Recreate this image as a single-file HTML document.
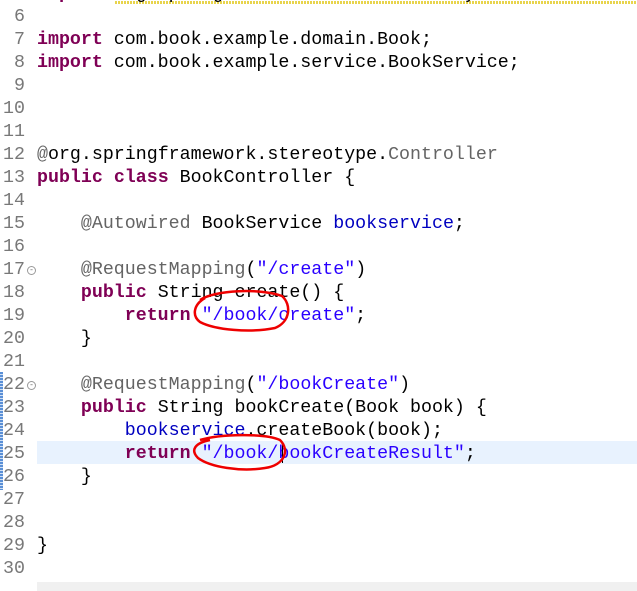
<!DOCTYPE html>
<html><head><style>
body{margin:0;width:637px;height:591px;overflow:hidden;background:#fff;position:relative;font-family:"Liberation Mono",monospace;font-size:18.3px;}
.l{position:absolute;left:0;height:23px;line-height:23px;white-space:pre;width:637px;overflow:hidden}
.n{position:absolute;left:0;width:25px;text-align:right;color:#787878}
.c{position:absolute;left:37px;color:#000}
.k{color:#7f0055;font-weight:bold}
.s{color:#2a00ff}
.a{color:#646464}
.f{color:#0000c0}
.fold{position:absolute;left:27px;top:7px;width:7px;height:7px;border:1px solid #999;border-radius:50%;font-size:8px;line-height:7px;text-align:center;color:#666}
</style></head><body>
<div style="position:absolute;left:37px;top:441px;width:600px;height:23px;background:#e8f2fe"></div>
<div style="position:absolute;left:0;top:372px;width:3px;height:118px;background:repeating-linear-gradient(#5a8fd6 0 2px,#cfe0f5 2px 3px)"></div>
<div style="position:absolute;left:115px;top:1px;width:522px;height:3px;background:repeating-linear-gradient(90deg,#e8d44d 0 2px,#fff 2px 3px)"></div>
<div style="position:absolute;left:37px;top:582px;width:600px;height:9px;background:#f0f0f0"></div>

<div class="l" style="top:-17px"><span class="n">5</span><span class="c"><span class="k">import</span> org.springframework.beans.factory.annotation.Autowired;</span></div>
<div class="l" style="top:6px"><span class="n">6</span></div>
<div class="l" style="top:29px"><span class="n">7</span><span class="c"><span class="k">import</span> com.book.example.domain.Book;</span></div>
<div class="l" style="top:52px"><span class="n">8</span><span class="c"><span class="k">import</span> com.book.example.service.BookService;</span></div>
<div class="l" style="top:75px"><span class="n">9</span></div>
<div class="l" style="top:98px"><span class="n">10</span></div>
<div class="l" style="top:121px"><span class="n">11</span></div>
<div class="l" style="top:144px"><span class="n">12</span><span class="c"><span class="a">@</span>org.springframework.stereotype.<span class="a">Controller</span></span></div>
<div class="l" style="top:167px"><span class="n">13</span><span class="c"><span class="k">public</span> <span class="k">class</span> BookController {</span></div>
<div class="l" style="top:190px"><span class="n">14</span></div>
<div class="l" style="top:213px"><span class="n">15</span><span class="c">    <span class="a">@Autowired</span> BookService <span class="f">bookservice</span>;</span></div>
<div class="l" style="top:236px"><span class="n">16</span></div>
<div class="l" style="top:259px"><span class="n">17</span><span class="fold">-</span><span class="c">    <span class="a">@RequestMapping</span>(<span class="s">"/create"</span>)</span></div>
<div class="l" style="top:282px"><span class="n">18</span><span class="c">    <span class="k">public</span> String create() {</span></div>
<div class="l" style="top:305px"><span class="n">19</span><span class="c">        <span class="k">return</span> <span class="s">"/book/create"</span>;</span></div>
<div class="l" style="top:328px"><span class="n">20</span><span class="c">    }</span></div>
<div class="l" style="top:351px"><span class="n">21</span></div>
<div class="l" style="top:374px"><span class="n">22</span><span class="fold">-</span><span class="c">    <span class="a">@RequestMapping</span>(<span class="s">"/bookCreate"</span>)</span></div>
<div class="l" style="top:397px"><span class="n">23</span><span class="c">    <span class="k">public</span> String bookCreate(Book book) {</span></div>
<div class="l" style="top:420px"><span class="n">24</span><span class="c">        <span class="f">bookservice</span>.createBook(book);</span></div>
<div class="l" style="top:443px"><span class="n">25</span><span class="c">        <span class="k">return</span> <span class="s">"/book/bookCreateResult"</span>;</span></div>
<div class="l" style="top:466px"><span class="n">26</span><span class="c">    }</span></div>
<div class="l" style="top:489px"><span class="n">27</span></div>
<div class="l" style="top:512px"><span class="n">28</span></div>
<div class="l" style="top:535px"><span class="n">29</span><span class="c">}</span></div>
<div class="l" style="top:558px"><span class="n">30</span></div>
<div style="position:absolute;left:282px;top:442px;width:1px;height:21px;background:#000"></div>

<svg style="position:absolute;left:0;top:0" width="637" height="591">
<path d="M200 300 C215 290,260 288,282 296 C292 305,290 322,275 328 C250 333,215 330,200 322 C192 316,193 305,205 298" fill="none" stroke="#e00" stroke-width="2.5"/>
<path d="M200 440 C220 434,265 433,280 440 C290 450,285 465,265 468 C240 472,210 467,198 458 C190 450,195 443,210 440" fill="none" stroke="#e00" stroke-width="2.5"/>
</svg>
</body></html>
